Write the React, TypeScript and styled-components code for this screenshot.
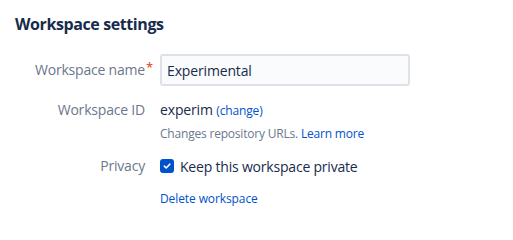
import React from "react";
import styled, { createGlobalStyle } from "styled-components";

const Global = createGlobalStyle`
  html, body { margin: 0; padding: 0; background: #ffffff; }
  body { font-family: "Open Sans", "Noto Sans", sans-serif; color: #172b4d; }
`;

const Page = styled.div`
  padding: 14px 15px 0 15px;
`;

const Title = styled.h2`
  margin: 0;
  font-size: 16px;
  line-height: 20px;
  font-weight: 700;
  color: #172b4d;
  letter-spacing: -0.4px;
`;

const Form = styled.div`
  margin-top: 20px;
  display: grid;
  grid-template-columns: 130px 250px;
  column-gap: 15px;
  row-gap: 14px;
  align-items: start;
`;

const Label = styled.div<{ $h: number }>`
  position: relative;
  justify-self: end;
  height: ${(p) => p.$h}px;
  line-height: ${(p) => p.$h}px;
  font-size: 14px;
  letter-spacing: -0.2px;
  color: #6b778c;
  white-space: nowrap;
`;

const Required = styled.span`
  position: absolute;
  left: 100%;
  top: -3px;
  margin-left: 1px;
  color: #de350b;
  font-size: 13px;
`;

const Input = styled.input`
  box-sizing: border-box;
  width: 250px;
  height: 32px;
  padding: 0 5px;
  border: 2px solid #dfe1e6;
  border-radius: 3px;
  background: #fafbfc;
  font-family: inherit;
  font-size: 14px;
  letter-spacing: -0.15px;
  color: #172b4d;
  outline: none;
`;

const Value = styled.div`
  display: flex;
  flex-direction: column;
`;

const Text = styled.div`
  font-size: 14px;
  line-height: 20px;
  letter-spacing: -0.15px;
  color: #172b4d;
  white-space: nowrap;
`;

const Link = styled.a<{ $small?: boolean }>`
  color: #0052cc;
  text-decoration: none;
  font-size: ${(p) => (p.$small ? 12 : 14)}px;
  cursor: pointer;
`;

const Help = styled.div`
  margin-top: 5px;
  font-size: 12px;
  line-height: 16px;
  letter-spacing: -0.2px;
  color: #6b778c;
  white-space: nowrap;
`;

const CheckRow = styled.label`
  display: flex;
  align-items: center;
  gap: 6px;
  height: 20px;
  font-size: 14px;
  letter-spacing: -0.2px;
  color: #172b4d;
`;

const Box = styled.span`
  width: 14px;
  height: 14px;
  border-radius: 3px;
  background: #0052cc;
  display: inline-flex;
  align-items: center;
  justify-content: center;
`;

const Spacer = styled.div``;

const DeleteRow = styled.div`
  margin-top: -1px;
  font-size: 12px;
  line-height: 20px;
  letter-spacing: -0.1px;
`;

export default function App() {
  return (
    <>
      <Global />
      <Page>
        <Title>Workspace settings</Title>
        <Form>
          <Label $h={32}>
            Workspace name<Required>*</Required>
          </Label>
          <Input defaultValue="Experimental" />

          <Label $h={20}>Workspace ID</Label>
          <Value>
            <Text>
              experim <Link $small>(change)</Link>
            </Text>
            <Help>
              Changes repository URLs. <Link $small>Learn more</Link>
            </Help>
          </Value>

          <Label $h={20}>Privacy</Label>
          <CheckRow>
            <Box>
              <svg width="10" height="10" viewBox="0 0 10 10">
                <path d="M2.3 5.2 L4.2 7 L7.8 3.2" fill="none" stroke="#fff" strokeWidth="1.6" strokeLinecap="round" strokeLinejoin="round" />
              </svg>
            </Box>
            Keep this workspace private
          </CheckRow>

          <Spacer />
          <DeleteRow>
            <Link $small>Delete workspace</Link>
          </DeleteRow>
        </Form>
      </Page>
    </>
  );
}
